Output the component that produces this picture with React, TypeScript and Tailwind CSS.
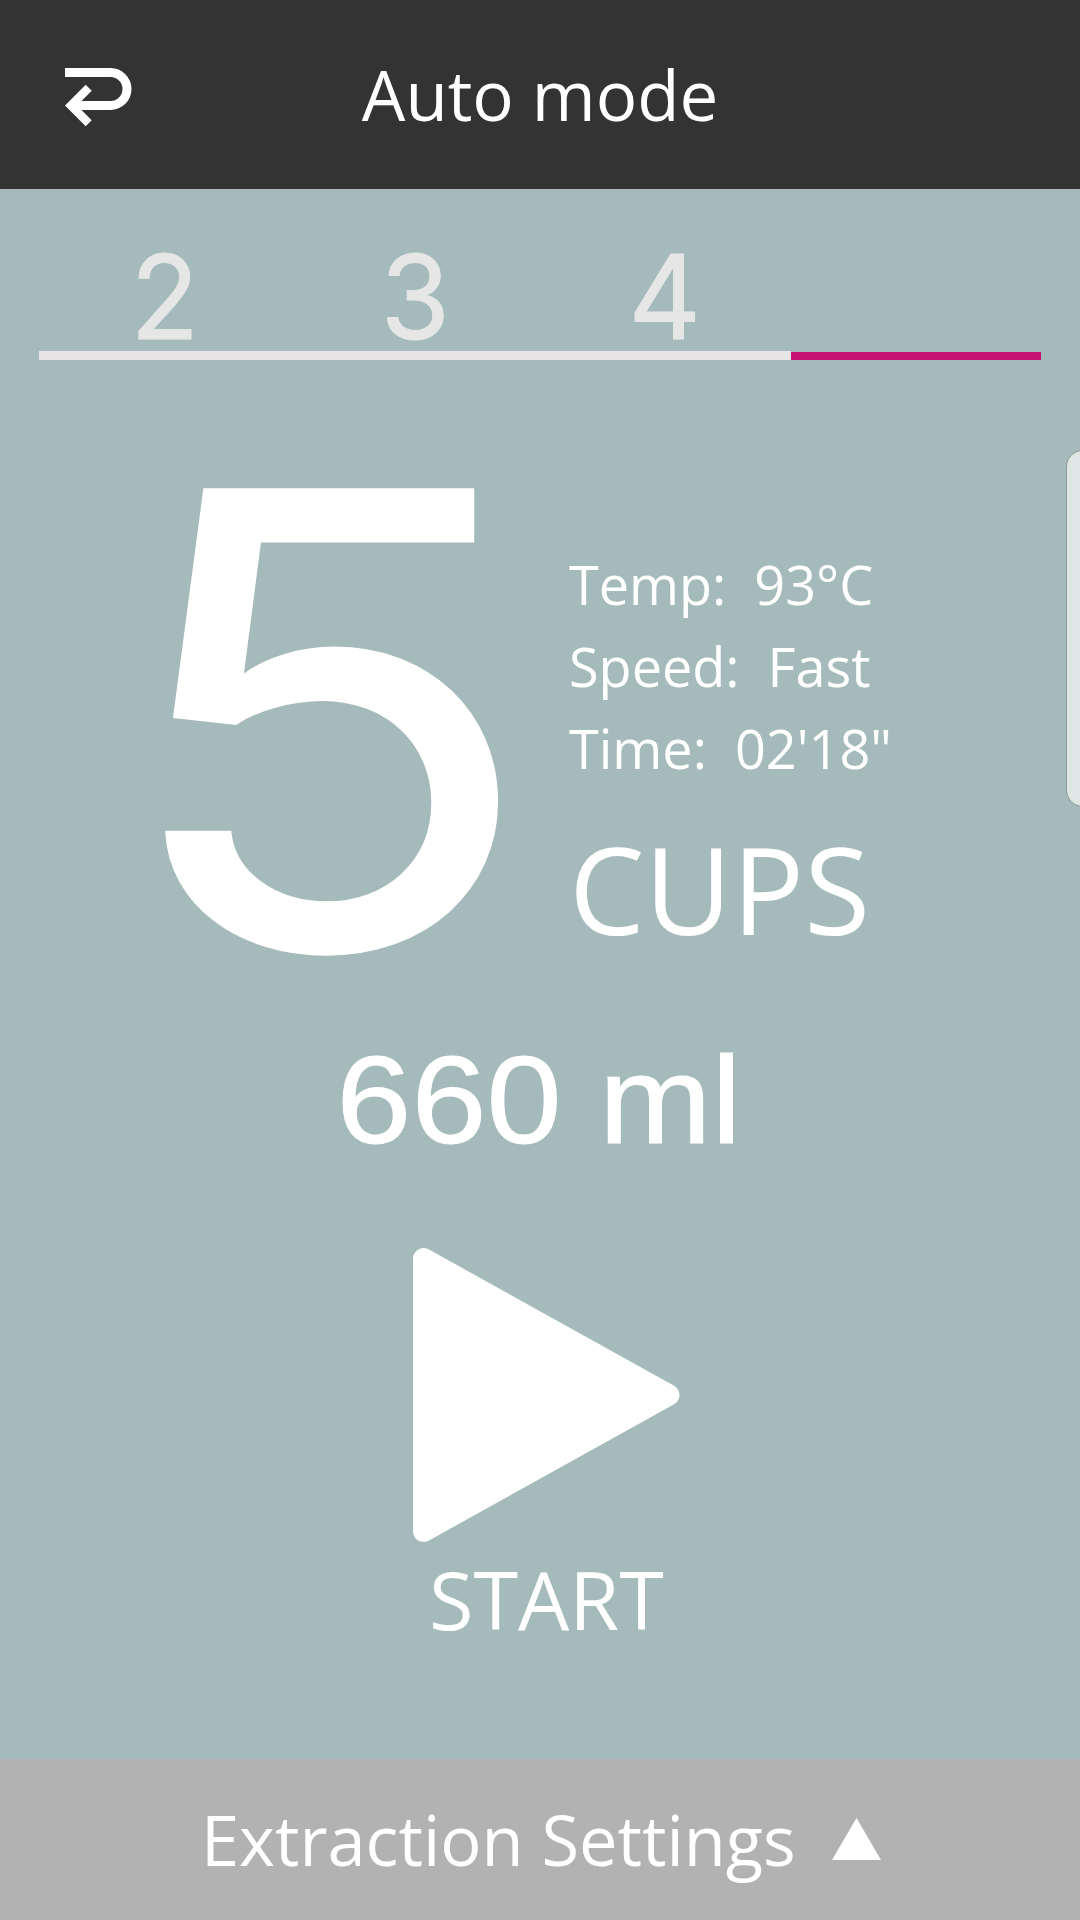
import { useState } from 'react';

type CupOption = {
  cups: number;
  volume: string;
  temp: string;
  speed: string;
  time: string;
};

const options: CupOption[] = [
  { cups: 2, volume: '260 ml', temp: '93°C', speed: 'Fast', time: '01\'10"' },
  { cups: 3, volume: '390 ml', temp: '93°C', speed: 'Fast', time: '01\'32"' },
  { cups: 4, volume: '520 ml', temp: '93°C', speed: 'Fast', time: '01\'55"' },
  { cups: 5, volume: '660 ml', temp: '93°C', speed: 'Fast', time: '02\'18"' },
];

function BackIcon() {
  return (
    <svg width="70" height="62" viewBox="0 0 70 62" fill="none" stroke="currentColor">
      <path d="M1 6.5H46.5a16.5 16.5 0 0 1 0 33H10" strokeWidth="9" />
      <path d="M24.7 21.7L7 39.6l17.7 17.7" strokeWidth="8.5" />
    </svg>
  );
}

function Header() {
  return (
    <header className="grid h-[189px] shrink-0 grid-cols-[1fr_auto_1fr] items-center bg-[#333333]">
      <button aria-label="Back" className="ml-16 mt-1 justify-self-start">
        <BackIcon />
      </button>
      <h1 className="text-[69px] leading-none">Auto mode</h1>
      <span />
    </header>
  );
}

type CupTabsProps = {
  selected: number;
  onSelect: (index: number) => void;
};

function CupTabs({ selected, onSelect }: CupTabsProps) {
  return (
    <nav className="mx-[39px] flex h-[171px] shrink-0 items-end">
      {options.map((option, index) => (
        <button
          key={option.cups}
          onClick={() => onSelect(index)}
          className="flex flex-1 flex-col text-center font-[Inter,sans-serif] text-[117px] leading-[108px] text-[#e6e6e6] [-webkit-text-stroke:1px_#e6e6e6]"
        >
          {index === selected ? null : <span className="scale-x-[0.96] self-center">{option.cups}</span>}
          <span className={index === selected ? 'h-2 w-full bg-[#c61072]' : 'h-[9px] w-full bg-[#e6e4e4]'} />
        </button>
      ))}
    </nav>
  );
}

export default function App() {
  const [selected, setSelected] = useState(3);
  const option = options[selected];

  return (
    <div className="relative flex h-[1920px] w-[1080px] flex-col overflow-hidden bg-[#a5babb] font-['Open_Sans',sans-serif] text-white">
      <Header />
      <CupTabs selected={selected} onSelect={setSelected} />

      <main className="flex flex-1 flex-col">
        <section className="flex h-[677px] pl-[113px]">
          <div className="w-[456px] pt-[124px]">
            <p className="w-fit origin-left scale-x-[1.11] font-[Inter,sans-serif] text-[630px] leading-[470px] [-webkit-text-stroke:3px_white]">
              {option.cups}
            </p>
          </div>
          <div className="pt-[183px]">
            <div className="text-[54px] leading-[82px] whitespace-pre">
              <p>{`Temp:  ${option.temp}`}</p>
              <p>{`Speed:  ${option.speed}`}</p>
              <p>{`Time:  ${option.time}`}</p>
            </div>
            <p className="mt-10 text-[120px] leading-none">CUPS</p>
          </div>
        </section>

        <p className="scale-x-[1.08] pr-0.5 text-center font-['Liberation_Sans',sans-serif] text-[125px] leading-none [-webkit-text-stroke:1px_white]">
          {option.volume}
        </p>

        <button className="mt-[86px] ml-[413px] flex w-[267px] flex-col items-center">
          <svg width="267" height="294" viewBox="0 0 267 294" fill="currentColor" stroke="currentColor">
            <path d="M10.5 10.5v273L256 147z" strokeWidth="21" strokeLinejoin="round" />
          </svg>
          <span className="mt-4 text-[81px] leading-none">START</span>
        </button>
      </main>

      <footer className="flex h-[161px] shrink-0 items-center bg-[#b2b2b2] pt-0.5 pl-[201px]">
        <button className="flex items-center gap-9 text-[68.6px] leading-none">
          Extraction Settings
          <svg width="49" height="42" viewBox="0 0 49 42" fill="currentColor" className="-mt-1">
            <path d="M24.5 0L49 42H0z" />
          </svg>
        </button>
      </footer>

      {/* edge panel handle */}
      <div className="absolute top-[450px] -right-5 h-[357px] w-[34px] rounded-[18px] border border-[#8b9b98] bg-[#dfe6e6]" />
    </div>
  );
}
